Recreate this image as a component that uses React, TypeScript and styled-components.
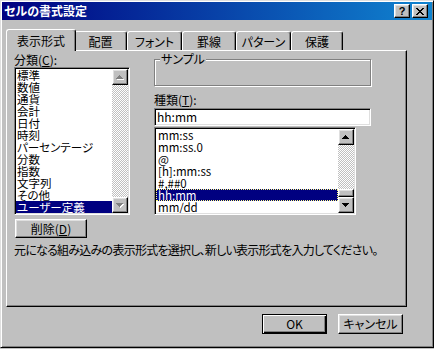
import styled, { createGlobalStyle, css } from "styled-components";

const GlobalStyle = createGlobalStyle`
  html, body {
    margin: 0;
    padding: 0;
    background: #c0c0c0;
  }
  body {
    font-family: "Noto Sans CJK JP", "Noto Sans", sans-serif;
    font-size: 12px;
    font-feature-settings: "palt";
    color: #000;
  }
`;

const raised = css`
  box-sizing: border-box;
  background: #c0c0c0;
  border: 1px solid;
  border-color: #fff #000 #000 #fff;
  box-shadow: inset -1px -1px #808080, inset 1px 1px #dfdfdf;
`;

const sunken = css`
  box-sizing: border-box;
  border: 1px solid;
  border-color: #808080 #fff #fff #808080;
  box-shadow: inset 1px 1px #000, inset -1px -1px #dfdfdf;
  padding: 1px;
  background: #fff;
`;

const Window = styled.div`
  box-sizing: border-box;
  width: 434px;
  height: 348px;
  display: flex;
  flex-direction: column;
  padding: 1px;
  background: #c0c0c0;
  border: 1px solid;
  border-color: #dfdfdf #000 #000 #dfdfdf;
  box-shadow: inset 1px 1px #fff, inset -1px -1px #808080;
`;

const TitleBar = styled.div`
  height: 18px;
  display: flex;
  align-items: center;
  padding: 0 4px 0 2px;
  background: linear-gradient(90deg, #000080 0%, #1084d0 100%);
`;

const TitleText = styled.div`
  flex: 1;
  color: #fff;
  font-weight: bold;
  font-size: 12px;
  line-height: 18px;
`;

const TitleButton = styled.div`
  ${raised};
  width: 16px;
  height: 14px;
  display: flex;
  align-items: center;
  justify-content: center;
  font-family: "Liberation Sans", Arial, sans-serif;
  font-weight: bold;
  font-size: 11px;
  line-height: 12px;
  & + & {
    margin-left: 2px;
  }
`;

const Body = styled.div`
  display: flex;
  flex-direction: column;
  width: 401px;
  padding: 9px 0 0 4px;
`;

const TabRow = styled.div`
  display: flex;
  align-items: flex-end;
  height: 21px;
  padding-left: 2px;
`;

const Tab = styled.div<{ $width: number; $active?: boolean }>`
  box-sizing: border-box;
  width: ${(p) => p.$width}px;
  height: 19px;
  padding-top: 1px;
  display: flex;
  align-items: center;
  justify-content: center;
  border-left: 1px solid #fff;
  border-top: 1px solid #fff;
  border-right: 1px solid #000;
  border-radius: 3px 3px 0 0;
  box-shadow: inset -1px 0 #808080;
  background: #c0c0c0;
  line-height: 14px;
  ${(p) =>
    p.$active &&
    css`
      width: ${p.$width + 4}px;
      height: 22px;
      margin: 0 -2px -1px;
      position: relative;
      z-index: 1;
    `}
`;

const Panel = styled.div`
  box-sizing: border-box;
  width: 401px;
  height: 257px;
  padding: 2px 7px 0;
  display: flex;
  flex-direction: column;
  border: 1px solid;
  border-color: #fff #000 #000 #fff;
  box-shadow: inset -1px -1px #808080;
`;

const Columns = styled.div`
  display: flex;
  gap: 24px;
`;

const Column = styled.div<{ $width: number }>`
  width: ${(p) => p.$width}px;
  display: flex;
  flex-direction: column;
`;

const Label = styled.div<{ $top?: number }>`
  height: 14px;
  line-height: 14px;
  margin-top: ${(p) => p.$top ?? 0}px;
  white-space: nowrap;
`;

const GroupBox = styled.div`
  position: relative;
  box-sizing: border-box;
  height: 27px;
  margin-top: 6px;
  border: 1px solid #808080;
  box-shadow: inset 1px 1px #fff, 1px 1px #fff;
`;

const Legend = styled.span`
  position: absolute;
  top: -8px;
  left: 5px;
  padding: 0 1px;
  background: #c0c0c0;
  line-height: 14px;
`;

const Field = styled.div`
  ${sunken};
  height: 18px;
  margin-top: 1px;
  padding-left: 2px;
  line-height: 14px;
`;

const ListBox = styled.div<{ $width?: number; $height: number; $top?: number }>`
  ${sunken};
  width: ${(p) => (p.$width ? `${p.$width}px` : "auto")};
  height: ${(p) => p.$height}px;
  margin-top: ${(p) => p.$top ?? 0}px;
  display: flex;
  overflow: hidden;
`;

const Items = styled.div`
  flex: 1;
  min-width: 0;
  overflow: hidden;
`;

const Item = styled.div<{ $selected?: boolean; $focused?: boolean; $pad: number }>`
  height: 12px;
  font-size: 11.5px;
  line-height: 12px;
  padding-left: ${(p) => p.$pad}px;
  white-space: nowrap;
  ${(p) =>
    p.$selected &&
    css`
      background: #000080;
      color: #fff;
    `}
  ${(p) =>
    p.$focused &&
    css`
      outline: 1px dotted #ffff80;
      outline-offset: -1px;
    `}
`;

const ScrollBar = styled.div`
  width: 16px;
  flex: none;
  display: flex;
  flex-direction: column;
`;

const ScrollButton = styled.div<{ $height?: number }>`
  ${raised};
  height: ${(p) => p.$height ?? 16}px;
  flex: none;
  display: flex;
  align-items: center;
  justify-content: center;
`;

const Track = styled.div`
  flex: 1;
  background-color: #c0c0c0;
  background-image: conic-gradient(#fff 0 25%, transparent 0 50%, #fff 0 75%, transparent 0);
  background-size: 2px 2px;
`;

const PushButton = styled.div<{ $width: number; $default?: boolean }>`
  ${raised};
  width: ${(p) => p.$width}px;
  height: 20px;
  display: flex;
  align-items: center;
  justify-content: center;
  line-height: 14px;
  ${(p) =>
    p.$default &&
    css`
      border-color: #000;
      box-shadow: inset 1px 1px #fff, inset -1px -1px #000, inset -2px -2px #808080;
    `}
`;

const DeleteButton = styled(PushButton)`
  height: 19px;
  margin: 4px 0 0 1px;
`;

const Hint = styled.div`
  margin-top: 5px;
  line-height: 14px;
  letter-spacing: -0.75px;
  white-space: nowrap;
`;

const Footer = styled.div`
  display: flex;
  justify-content: flex-end;
  gap: 11px;
  margin-top: 7px;
  padding-right: 4px;
`;

const UP = "M3 0h1v1h1v1h1v1h1v1H0V3h1V2h1V1h1z";
const DOWN = "M0 0h7v1H6v1H5v1H4v1H3V3H2V2H1V1H0z";

function Arrow({ dir, disabled }: { dir: "up" | "down"; disabled?: boolean }) {
  const d = dir === "up" ? UP : DOWN;
  return (
    <svg width="8" height="5" viewBox="0 0 8 5" shapeRendering="crispEdges">
      {disabled && <path d={d} fill="#fff" transform="translate(1 1)" />}
      <path d={d} fill={disabled ? "#808080" : "#000"} />
    </svg>
  );
}

function CloseGlyph() {
  return (
    <svg width="8" height="7" viewBox="0 0 8 7" shapeRendering="crispEdges">
      <path
        d="M0 0h2v1H0zM6 0h2v1H6zM1 1h2v1H1zM5 1h2v1H5zM2 2h4v1H2zM3 3h2v1H3zM2 4h4v1H2zM1 5h2v1H1zM5 5h2v1H5zM0 6h2v1H0zM6 6h2v1H6z"
        fill="#000"
      />
    </svg>
  );
}

const tabs = [
  { label: "表示形式", width: 66 },
  { label: "配置", width: 53 },
  { label: "フォント", width: 55 },
  { label: "罫線", width: 54 },
  { label: "パターン", width: 55 },
  { label: "保護", width: 52 },
];

const categories = [
  "標準",
  "数値",
  "通貨",
  "会計",
  "日付",
  "時刻",
  "パーセンテージ",
  "分数",
  "指数",
  "文字列",
  "その他",
  "ユーザー定義",
];

const formats = ["mm:ss", "mm:ss.0", "@", "[h]:mm:ss", "#,##0", "hh:mm", "mm/dd"];

export default function App() {
  return (
    <>
      <GlobalStyle />
      <Window>
        <TitleBar>
          <TitleText>セルの書式設定</TitleText>
          <TitleButton>?</TitleButton>
          <TitleButton>
            <CloseGlyph />
          </TitleButton>
        </TitleBar>
        <Body>
          <TabRow>
            {tabs.map((t, i) => (
              <Tab key={t.label} $width={t.width} $active={i === 0}>
                {t.label}
              </Tab>
            ))}
          </TabRow>
          <Panel>
            <Columns>
              <Column $width={116}>
                <Label>
                  分類(<u>C</u>):
                </Label>
                <ListBox $height={148}>
                  <Items>
                    {categories.map((c) => (
                      <Item key={c} $pad={1} $selected={c === "ユーザー定義"}>
                        {c}
                      </Item>
                    ))}
                  </Items>
                  <ScrollBar>
                    <ScrollButton>
                      <Arrow dir="up" disabled />
                    </ScrollButton>
                    <Track />
                    <ScrollButton>
                      <Arrow dir="down" disabled />
                    </ScrollButton>
                  </ScrollBar>
                </ListBox>
              </Column>
              <Column $width={217}>
                <GroupBox>
                  <Legend>サンプル</Legend>
                </GroupBox>
                <Label $top={7}>
                  種類(<u>T</u>):
                </Label>
                <Field>hh:mm</Field>
                <ListBox $width={202} $height={88} $top={1}>
                  <Items>
                    {formats.map((f) => (
                      <Item key={f} $pad={2} $selected={f === "hh:mm"} $focused={f === "hh:mm"}>
                        {f}
                      </Item>
                    ))}
                  </Items>
                  <ScrollBar>
                    <ScrollButton>
                      <Arrow dir="up" />
                    </ScrollButton>
                    <Track />
                    <ScrollButton $height={8} />
                    <ScrollButton>
                      <Arrow dir="down" />
                    </ScrollButton>
                  </ScrollBar>
                </ListBox>
              </Column>
            </Columns>
            <DeleteButton $width={72}>
              削除(<u>D</u>)
            </DeleteButton>
            <Hint>元になる組み込みの表示形式を選択し、新しい表示形式を入力してください。</Hint>
          </Panel>
          <Footer>
            <PushButton $width={65} $default>
              OK
            </PushButton>
            <PushButton $width={65}>キャンセル</PushButton>
          </Footer>
        </Body>
      </Window>
    </>
  );
}
